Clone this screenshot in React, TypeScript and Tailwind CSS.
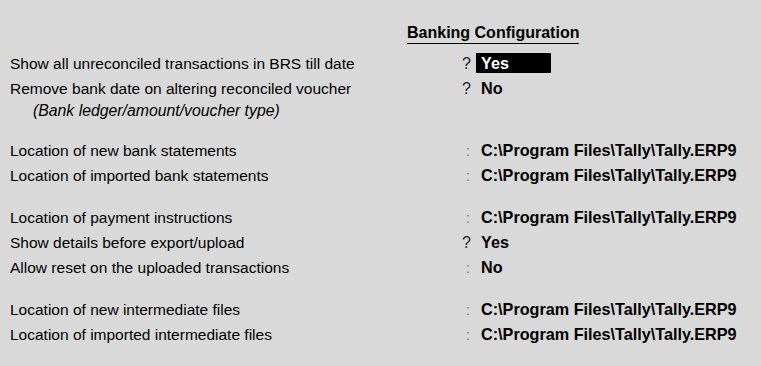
import React from "react";

type Row =
  | { kind: "item"; label: string; mark: "?" | ":"; value: string; highlight?: boolean }
  | { kind: "note"; text: string }
  | { kind: "gap" };

const rows: Row[] = [
  { kind: "item", label: "Show all unreconciled transactions in BRS till date", mark: "?", value: "Yes", highlight: true },
  { kind: "item", label: "Remove bank date on altering reconciled voucher", mark: "?", value: "No" },
  { kind: "note", text: "(Bank ledger/amount/voucher type)" },
  { kind: "gap" },
  { kind: "item", label: "Location of new bank statements", mark: ":", value: "C:\\Program Files\\Tally\\Tally.ERP9" },
  { kind: "item", label: "Location of imported bank statements", mark: ":", value: "C:\\Program Files\\Tally\\Tally.ERP9" },
  { kind: "gap" },
  { kind: "item", label: "Location of payment instructions", mark: ":", value: "C:\\Program Files\\Tally\\Tally.ERP9" },
  { kind: "item", label: "Show details before export/upload", mark: "?", value: "Yes" },
  { kind: "item", label: "Allow reset on the uploaded transactions", mark: ":", value: "No" },
  { kind: "gap" },
  { kind: "item", label: "Location of new intermediate files", mark: ":", value: "C:\\Program Files\\Tally\\Tally.ERP9" },
  { kind: "item", label: "Location of imported intermediate files", mark: ":", value: "C:\\Program Files\\Tally\\Tally.ERP9" },
];

export default function App() {
  return (
    <div className="w-[761px] h-[366px] overflow-hidden bg-[#d9d9d9] text-black font-['Liberation_Sans',Arial,sans-serif] text-[15.5px] pt-[21px]">
      <div className="pl-[407px] h-[30px]">
        <span className="inline-block font-bold text-[16px] leading-[20px] border-b-[1.5px] border-black">
          Banking Configuration
        </span>
      </div>
      <div className="flex flex-col">
        {rows.map((r, i) => {
          if (r.kind === "gap") return <div key={i} className="h-[17px]" />;
          if (r.kind === "note")
            return (
              <div key={i} className="h-[20px] leading-[20px] pl-[33px] italic text-[15.8px]">
                {r.text}
              </div>
            );
          return (
            <div key={i} className="grid grid-cols-[455px_21px_1fr] h-[25px] items-center">
              <div className="pl-[10px] leading-[20px]">{r.label}</div>
              <div
                className={
                  "text-right leading-[20px] " +
                  (r.mark === ":" ? "text-[#777777] pr-[6px]" : "text-[#222222] pr-[5px] text-[16px]")
                }
              >
                {r.mark}
              </div>
              <div>
                <span
                  className={
                    "inline-block font-bold text-[16.2px] leading-[20px] pl-[5px] " +
                    (r.highlight ? "bg-black text-white w-[75px]" : "")
                  }
                >
                  {r.value}
                </span>
              </div>
            </div>
          );
        })}
      </div>
    </div>
  );
}
